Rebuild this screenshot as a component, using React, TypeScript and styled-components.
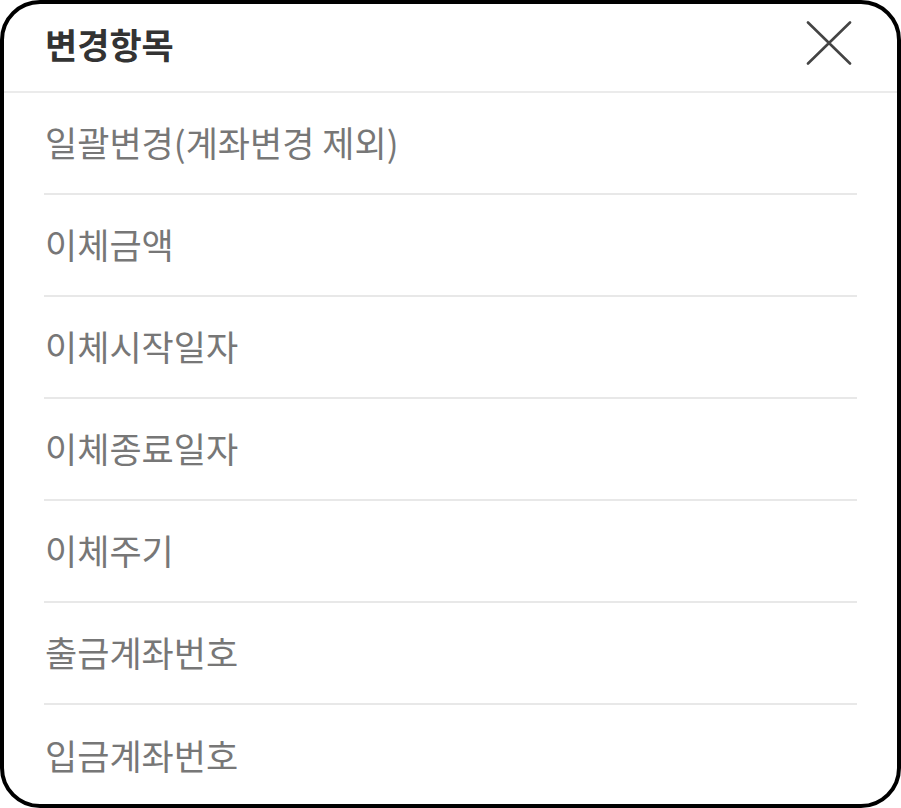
import React from "react";
import styled, { createGlobalStyle } from "styled-components";

const GlobalStyle = createGlobalStyle`
  html, body {
    margin: 0;
    padding: 0;
    background: #ffffff;
  }
  * {
    box-sizing: border-box;
  }
`;

const items = [
  "일괄변경(계좌변경 제외)",
  "이체금액",
  "이체시작일자",
  "이체종료일자",
  "이체주기",
  "출금계좌번호",
  "입금계좌번호",
];

const Panel = styled.div`
  width: 901px;
  height: 808px;
  border: 4px solid #000;
  border-radius: 40px;
  background: #fff;
  overflow: hidden;
  display: flex;
  flex-direction: column;
  font-family: "Noto Sans CJK KR", "Noto Sans", sans-serif;
`;

const Header = styled.div`
  height: 89px;
  flex-shrink: 0;
  display: flex;
  align-items: center;
  justify-content: space-between;
  padding: 0 44px 9px 41px;
  border-bottom: 2px solid #ebebeb;
`;

const Title = styled.h1`
  margin: 0;
  font-size: 35px;
  font-weight: 700;
  color: #333;
`;

const CloseButton = styled.button`
  width: 48px;
  height: 48px;
  padding: 0;
  border: none;
  background: none;
  display: flex;
  align-items: center;
  justify-content: center;
  cursor: pointer;
`;

const List = styled.ul`
  list-style: none;
  margin: 0 40px;
  padding: 0;
`;

const Item = styled.li`
  height: 102px;
  display: flex;
  align-items: center;
  padding: 0 0 4px 1px;
  border-bottom: 2px solid #e8e8e8;
  font-size: 35px;
  color: #777;

  &:last-child {
    border-bottom: none;
  }
`;

const CloseIcon = () => (
  <svg width="46" height="44" viewBox="0 0 46 44" fill="none">
    <path
      d="M2 1.5L44 42.5M44 1.5L2 42.5"
      stroke="#444"
      strokeWidth="2.6"
      strokeLinecap="round"
    />
  </svg>
);

export default function App() {
  return (
    <>
      <GlobalStyle />
      <Panel>
        <Header>
          <Title>변경항목</Title>
          <CloseButton aria-label="닫기">
            <CloseIcon />
          </CloseButton>
        </Header>
        <List>
          {items.map((text) => (
            <Item key={text}>{text}</Item>
          ))}
        </List>
      </Panel>
    </>
  );
}
